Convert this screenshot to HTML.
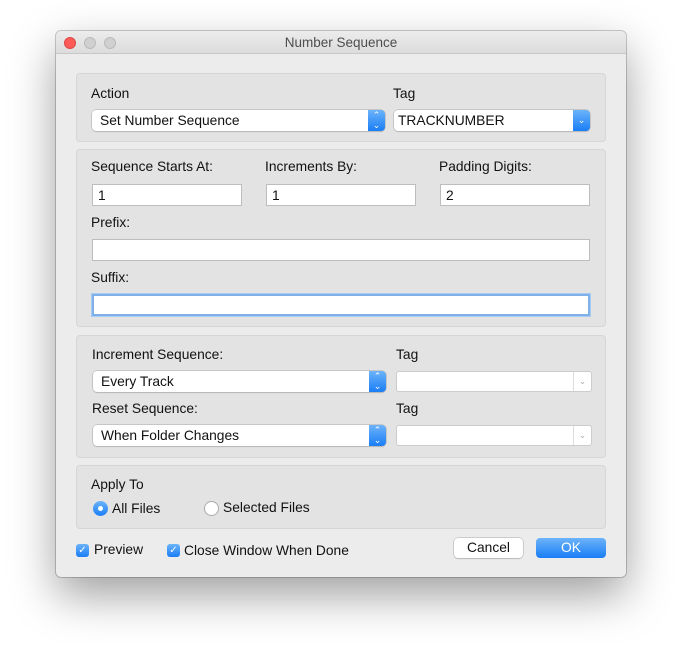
<!DOCTYPE html><html><head><style>
body{margin:0;width:682px;height:658px;background:#fff;font-family:"Liberation Sans",sans-serif;font-size:13.8px;color:#111;position:relative;overflow:hidden}
.win{position:absolute;left:56px;top:31px;width:570px;height:546px;background:#ececec;border-radius:5px;box-shadow:0 18px 45px rgba(0,0,0,.38),0 0 0 1px rgba(0,0,0,.2)}
.tb{height:22px;border-bottom:1px solid #c8c8c8;background:linear-gradient(#ececec,#dcdcdc);border-radius:5px 5px 0 0;text-align:center;line-height:23px;color:#4d4d4d;font-size:13.5px}
.dot{position:absolute;top:6px;width:12px;height:12px;border-radius:50%;background:#d0d0d0;border:.5px solid #bbb;box-sizing:border-box}
.p{position:absolute;left:20px;width:530px;background:#e3e3e3;border:1px solid #d6d6d6;border-radius:4px;box-sizing:border-box}
.a{position:absolute}
.l{position:absolute}
.in{position:absolute;height:22px;background:#fff;border:1px solid #bdbdbd;box-sizing:border-box;padding-left:5px;line-height:21px}
.pop{position:absolute;height:21px;background:#fff;border-radius:4px;box-shadow:0 0 0 .5px #aaa,0 1px 1px rgba(0,0,0,.15);padding-left:8px;line-height:21px;box-sizing:border-box}
.pop .b{position:absolute;right:0;top:0;width:17px;height:21px;background:linear-gradient(#6cb3fa,#1a7ef5);border-radius:0 4px 4px 0;color:#fff;font-size:9px;text-align:center;line-height:10px}
.cb{position:absolute;height:21px;background:#fff;border:1px solid #ccc;box-sizing:border-box;border-radius:3px}
.cb span{position:absolute;right:0;top:0;width:17px;height:19px;border-left:1px solid #ddd;color:#aaa;font-size:9px;text-align:center;line-height:19px}
</style></head><body>
<div class="win">
<div class="tb">Number Sequence</div>
<div class="dot" style="left:8px;background:#fc5b57;border-color:#df4744"></div>
<div class="dot" style="left:28px"></div>
<div class="dot" style="left:48px"></div>

<div class="p" style="top:42px;height:69px"></div>
<div class="l" style="left:35px;top:55px">Action</div>
<div class="l" style="left:337px;top:55px">Tag</div>
<div class="pop" style="left:36px;top:79px;width:293px">Set Number Sequence<div class="b">⌃<br>⌄</div></div>
<div class="pop" style="left:338px;top:79px;width:196px;padding-left:4px">TRACKNUMBER<div class="b" style="line-height:21px">⌄</div></div>

<div class="p" style="top:118px;height:178px"></div>
<div class="l" style="left:35px;top:128px">Sequence Starts At:</div>
<div class="l" style="left:209px;top:128px">Increments By:</div>
<div class="l" style="left:383px;top:128px">Padding Digits:</div>
<div class="in" style="left:36px;top:153px;width:150px">1</div>
<div class="in" style="left:210px;top:153px;width:150px">1</div>
<div class="in" style="left:384px;top:153px;width:150px">2</div>
<div class="l" style="left:35px;top:184px">Prefix:</div>
<div class="in" style="left:36px;top:208px;width:498px"></div>
<div class="l" style="left:35px;top:239px">Suffix:</div>
<div class="in" style="left:36px;top:263px;width:498px;border:2px solid #7fb0ea;box-shadow:0 0 0 1px #a9ccf3"></div>

<div class="p" style="top:304px;height:123px"></div>
<div class="l" style="left:36px;top:316px">Increment Sequence:</div>
<div class="l" style="left:340px;top:316px">Tag</div>
<div class="pop" style="left:37px;top:340px;width:293px">Every Track<div class="b">⌃<br>⌄</div></div>
<div class="cb" style="left:340px;top:340px;width:196px"><span>⌄</span></div>
<div class="l" style="left:36px;top:370px">Reset Sequence:</div>
<div class="l" style="left:340px;top:370px">Tag</div>
<div class="pop" style="left:37px;top:394px;width:293px">When Folder Changes<div class="b">⌃<br>⌄</div></div>
<div class="cb" style="left:340px;top:394px;width:196px"><span>⌄</span></div>

<div class="p" style="top:434px;height:64px"></div>
<div class="l" style="left:35px;top:446px">Apply To</div>
<div class="a" style="left:37px;top:470px;width:15px;height:15px;border-radius:50%;background:linear-gradient(#6cb3fa,#1a7ef5)"><div style="margin:5px;width:5px;height:5px;border-radius:50%;background:#fff"></div></div>
<div class="l" style="left:56px;top:470px">All Files</div>
<div class="a" style="left:148px;top:470px;width:15px;height:15px;border-radius:50%;background:#fff;border:1px solid #aaa;box-sizing:border-box"></div>
<div class="l" style="left:167px;top:469px">Selected Files</div>

<div class="a" style="left:20px;top:513px;width:13px;height:13px;border-radius:3px;background:linear-gradient(#6cb3fa,#1a7ef5);color:#fff;font-size:10px;text-align:center;line-height:13px">✓</div>
<div class="l" style="left:38px;top:511px">Preview</div>
<div class="a" style="left:111px;top:513px;width:13px;height:13px;border-radius:3px;background:linear-gradient(#6cb3fa,#1a7ef5);color:#fff;font-size:10px;text-align:center;line-height:13px">✓</div>
<div class="l" style="left:128px;top:512px">Close Window When Done</div>
<div class="a" style="left:398px;top:507px;width:69px;height:20px;background:#fff;border-radius:4px;box-shadow:0 0 0 .5px #aaa,0 1px 1px rgba(0,0,0,.15);text-align:center;line-height:20px">Cancel</div>
<div class="a" style="left:480px;top:507px;width:70px;height:20px;background:linear-gradient(#6cb3fa,#1a7ef5);border-radius:4px;color:#fff;text-align:center;line-height:20px">OK</div>
</div>
</body></html>
